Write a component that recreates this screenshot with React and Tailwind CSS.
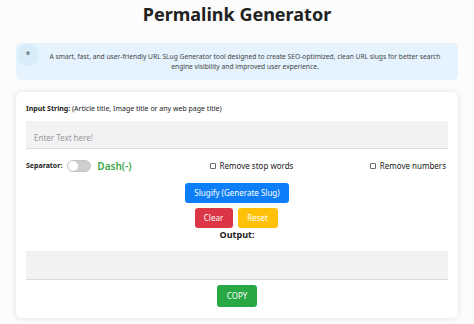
export default function App() {
  return (
    <div className="w-[474px] h-[324px] bg-[#fdfcfc] overflow-hidden" style={{ fontFamily: '"Noto Sans", sans-serif' }}>
      <h1 className="text-center text-[18px] leading-[24px] font-bold text-[#222] pt-[2px]">Permalink Generator</h1>

      <div className="mx-[16px] mt-[17px] h-[37px] rounded-[5px] bg-[#e4f3fd] relative flex items-center">
        <div className="absolute left-[1px] top-[1px] w-[22px] h-[22px] rounded-full bg-[#d9ecf9] flex items-center justify-center text-[9px] text-[#555]">*</div>
        <p className="w-full text-center text-[6.7px] leading-[10px] text-[#444] pl-[30px] pr-[14px]">
          A smart, fast, and user-friendly URL SLug Generator tool designed to create SEO-optimized, clean URL slugs for better search engine visibility and improved user experience.
        </p>
      </div>

      <div className="mx-[16px] mt-[12px] h-[226px] rounded-[6px] bg-white shadow-[0_0_6px_rgba(0,0,0,0.12)] px-[10px] pt-[12px]">
        <div className="text-[7px] leading-[10px] text-[#222]">
          <span className="font-bold">Input String:</span> (Article title, Image title or any web page title)
        </div>
        <div className="mt-[7px] h-[28px] bg-[#f2f2f4] border-b border-[#dcdcdc] flex items-center px-[8px] pt-[6px] text-[8px] text-[#9a9a9a]">
          Enter Text here!
        </div>

        <div className="mt-[9px] h-[16px] flex items-center text-[#222]">
          <span className="text-[7px] font-bold">Separator:</span>
          <div className="ml-[5px] w-[24px] h-[12px] rounded-full bg-[#cfcfcf] border border-[#c4c4c4] relative">
            <div className="absolute left-0 top-0 w-[10px] h-[10px] rounded-full bg-white"></div>
          </div>
          <span className="ml-[6px] text-[10px] font-semibold text-[#3aa845]">Dash(-)</span>
          <div className="ml-[78px] flex items-center text-[8px]">
            <span className="w-[6px] h-[6px] border border-[#666] rounded-[1px] mr-[4px]"></span>
            Remove stop words
          </div>
          <div className="ml-auto mr-[2px] flex items-center text-[8px]">
            <span className="w-[6px] h-[6px] border border-[#666] rounded-[1px] mr-[4px]"></span>
            Remove numbers
          </div>
        </div>

        <div className="mt-[9px] flex justify-center">
          <button className="w-[104px] h-[20px] rounded-[3px] bg-[#0d7ef7] text-white text-[8px]">Slugify (Generate Slug)</button>
        </div>
        <div className="mt-[5px] flex justify-center gap-[5px] pr-[2px]">
          <button className="w-[38px] h-[20px] rounded-[3px] bg-[#dc3545] text-white text-[8px]">Clear</button>
          <button className="w-[40px] h-[20px] rounded-[3px] bg-[#ffc107] text-white text-[8px]">Reset</button>
        </div>
        <div className="text-center text-[9px] leading-[14px] font-bold text-[#222]">Output:</div>

        <div className="mt-[9px] h-[29px] bg-[#f2f2f4] border-b border-[#dcdcdc]"></div>
        <div className="mt-[5px] flex justify-center">
          <button className="w-[40px] h-[22px] rounded-[3px] bg-[#28a745] text-white text-[8px]">COPY</button>
        </div>
      </div>
    </div>
  );
}
